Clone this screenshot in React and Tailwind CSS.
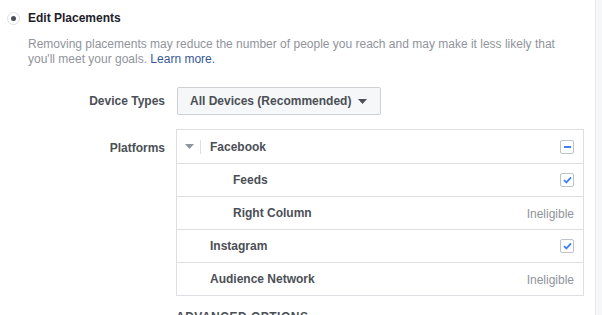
import React from "react";

const rows=[
{name:"Facebook",indent:false,caret:true,status:"minus"},
{name:"Feeds",indent:true,status:"check"},
{name:"Right Column",indent:true,status:"ineligible"},
{name:"Instagram",indent:false,status:"check"},
{name:"Audience Network",indent:false,status:"ineligible"}
]

function Status({type}){

if(type==="ineligible"){
return <span className="text-[12px] text-[#90949c]">Ineligible</span>
}

return(
<span className="w-[14px] h-[14px] rounded-[2px] border border-[#bec3c9] bg-white flex items-center justify-center">
{type==="minus" ? (
<span className="w-[7px] h-[2px] bg-[#4080ff]"></span>
) : (
<svg width="9" height="8" viewBox="0 0 9 8">
<path d="M1 4.2 L3.4 6.4 L8 1.4" fill="none" stroke="#4080ff" strokeWidth="1.8"/>
</svg>
)}
</span>
)

}

export default function App(){

return(

<div className="w-[602px] h-[315px] overflow-hidden bg-[#f6f7f9] flex" style={{fontFamily:"'Liberation Sans', Arial, sans-serif"}}>

<div className="w-[596px] h-full bg-white border-r border-[#e5e7ea] pt-[11px]">

<div className="flex items-center h-[14px]">
<span className="ml-[7px] w-[13px] h-[13px] rounded-full border border-[#dddfe2] bg-white flex items-center justify-center">
<span className="w-[5px] h-[5px] rounded-full bg-[#4b4f56]"></span>
</span>
<span className="ml-[8px] text-[12px] font-bold text-[#1d2129]">Edit Placements</span>
</div>

<p className="ml-[28px] mt-[12px] w-[548px] text-[12px] leading-[15px] text-[#90949c]">
Removing placements may reduce the number of people you reach and may make it less likely that you'll meet your goals. <span className="text-[#365899]">Learn more.</span>
</p>

<div className="flex items-center mt-[20px]">
<div className="w-[165px] text-right text-[12px] font-bold text-[#4b4f56]">Device Types</div>
<button className="ml-[12px] h-[28px] w-[204px] flex items-center pl-[12px] bg-[#f6f7f9] border border-[#ced0d4] rounded-[2px] text-[12px] font-bold text-[#4b4f56]">
All Devices (Recommended)
<svg className="ml-[7px]" width="9" height="5" viewBox="0 0 9 5"><path d="M0 0 L9 0 L4.5 5 Z" fill="#4b4f56"/></svg>
</button>
</div>

<div className="flex mt-[14px]">
<div className="w-[165px] text-right text-[12px] font-bold text-[#4b4f56] pt-[10px]">Platforms</div>
<div className="ml-[11px] w-[408px] border border-[#dddfe2]">
{rows.map((r,i)=>(
<div key={r.name} className={"h-[33px] flex items-center pr-[9px] "+(i>0?"border-t border-[#dddfe2]":"")}>
{r.caret ? (
<div className="flex items-center">
<svg className="ml-[8px]" width="9" height="5" viewBox="0 0 9 5"><path d="M0 0 L9 0 L4.5 5 Z" fill="#90949c"/></svg>
<span className="ml-[6px] w-px h-[14px] bg-[#dddfe2]"></span>
<span className="ml-[9px] text-[12px] font-bold text-[#4b4f56]">{r.name}</span>
</div>
) : (
<span className={(r.indent?"ml-[56px]":"ml-[33px]")+" text-[12px] font-bold text-[#4b4f56]"}>{r.name}</span>
)}
<div className="ml-auto"><Status type={r.status}/></div>
</div>
))}
</div>
</div>

<div className="ml-[176px] mt-[12px] text-[12px] font-bold text-[#4b4f56] tracking-[0.5px]">ADVANCED OPTIONS</div>

</div>

</div>

)

}
